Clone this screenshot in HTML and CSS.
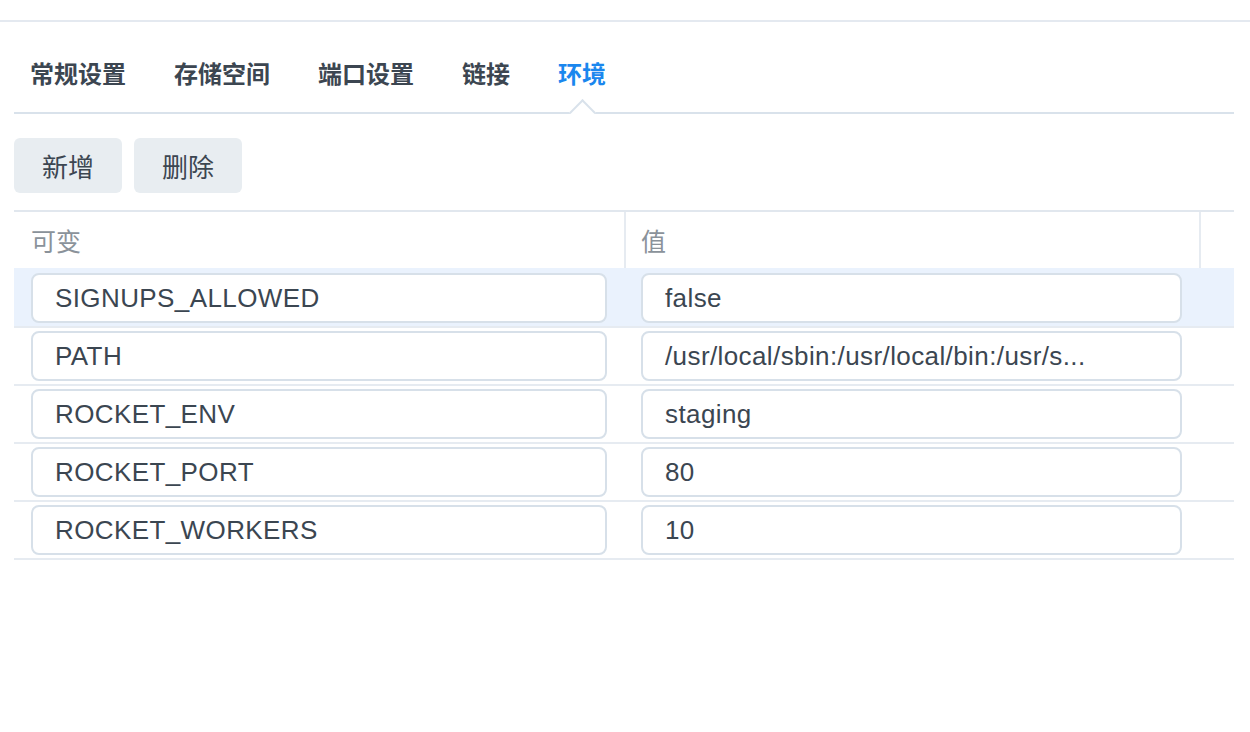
FILE: index.html
```html
<!DOCTYPE html>
<html lang="zh-CN">
<head>
<meta charset="utf-8">
<title>环境</title>
<link rel="stylesheet" href="styles.css">
</head>
<body>
<div class="topbar"></div>
<div class="content">
  <div class="tabs">
    <div class="tab">常规设置</div>
    <div class="tab">存储空间</div>
    <div class="tab">端口设置</div>
    <div class="tab">链接</div>
    <div class="tab active">环境</div>
  </div>
  <div class="toolbar">
    <button class="btn">新增</button>
    <button class="btn">删除</button>
  </div>
  <div class="table">
    <div class="thead">
      <div class="th c1">可变</div>
      <div class="th c2">值</div>
      <div class="th c3"></div>
    </div>
    <div class="row selected">
      <div class="td c1"><div class="field">SIGNUPS_ALLOWED</div></div>
      <div class="td c2"><div class="field">false</div></div>
      <div class="td c3"></div>
    </div>
    <div class="row">
      <div class="td c1"><div class="field">PATH</div></div>
      <div class="td c2"><div class="field">/usr/local/sbin:/usr/local/bin:/usr/s...</div></div>
      <div class="td c3"></div>
    </div>
    <div class="row">
      <div class="td c1"><div class="field">ROCKET_ENV</div></div>
      <div class="td c2"><div class="field">staging</div></div>
      <div class="td c3"></div>
    </div>
    <div class="row">
      <div class="td c1"><div class="field">ROCKET_PORT</div></div>
      <div class="td c2"><div class="field">80</div></div>
      <div class="td c3"></div>
    </div>
    <div class="row">
      <div class="td c1"><div class="field">ROCKET_WORKERS</div></div>
      <div class="td c2"><div class="field">10</div></div>
      <div class="td c3"></div>
    </div>
  </div>
</div>
</body>
</html>
```

FILE: styles.css
```css
* { box-sizing: border-box; }

html, body {
  margin: 0;
  padding: 0;
  background: #ffffff;
  font-family: "Liberation Sans", "Noto Sans CJK SC", Arial, sans-serif;
  color: #3c4651;
}

.topbar {
  height: 22px;
  border-bottom: 2px solid #e4e9f0;
}

.content {
  padding: 0 16px 0 14px;
}

.tabs {
  display: flex;
  margin-top: 34px;
  border-bottom: 2px solid #d9e2eb;
}

.tab {
  position: relative;
  font-family: "Noto Sans CJK SC", sans-serif;
  font-weight: 700;
  font-size: 24px;
  line-height: 34px;
  padding: 0 16px 22px 16px;
  margin-right: 16px;
  color: #3c4651;
}

.tab.active {
  color: #1a87ee;
}

.tab.active::after {
  content: "";
  position: absolute;
  left: 50%;
  bottom: -10px;
  width: 17px;
  height: 17px;
  margin-left: -9.5px;
  background: #ffffff;
  border-top: 2px solid #d9e2eb;
  border-left: 2px solid #d9e2eb;
  transform: rotate(45deg);
}

.toolbar {
  display: flex;
  gap: 12px;
  margin-top: 24px;
}

.btn {
  height: 55px;
  width: 108px;
  border: none;
  border-radius: 6px;
  background: #e8edf1;
  color: #3c4651;
  font-family: "Noto Sans CJK SC", sans-serif;
  font-size: 26px;
  padding: 0;
  line-height: 55px;
}

.table {
  margin-top: 17px;
  border-top: 2px solid #e1e7ee;
}

.thead, .row {
  display: grid;
  grid-template-columns: 612px 575px 1fr;
}

.thead {
  height: 56px;
}

.th {
  font-family: "Noto Sans CJK SC", sans-serif;
  font-size: 25px;
  color: #8a929a;
  padding: 0 17px;
  display: flex;
  align-items: center;
  border-right: 2px solid #e6ebf1;
}

.th.c2 { padding-left: 15px; }
.th.c3 { border-right: none; }

.row {
  border-bottom: 2px solid #e6ebf1;
  padding: 3px 0;
}

.row.selected {
  background: #eaf2fd;
  padding-top: 5px;
}

.td.c1 { padding: 0 19px 0 17px; }
.td.c2 { padding: 0 19px 0 15px; }

.field {
  height: 50px;
  border: 2px solid #d7e0e9;
  border-radius: 8px;
  background: #ffffff;
  padding: 0 22px;
  font-size: 26px;
  letter-spacing: 0.4px;
  line-height: 46px;
  color: #3b4651;
  white-space: nowrap;
  overflow: hidden;
  text-overflow: ellipsis;
}
```
